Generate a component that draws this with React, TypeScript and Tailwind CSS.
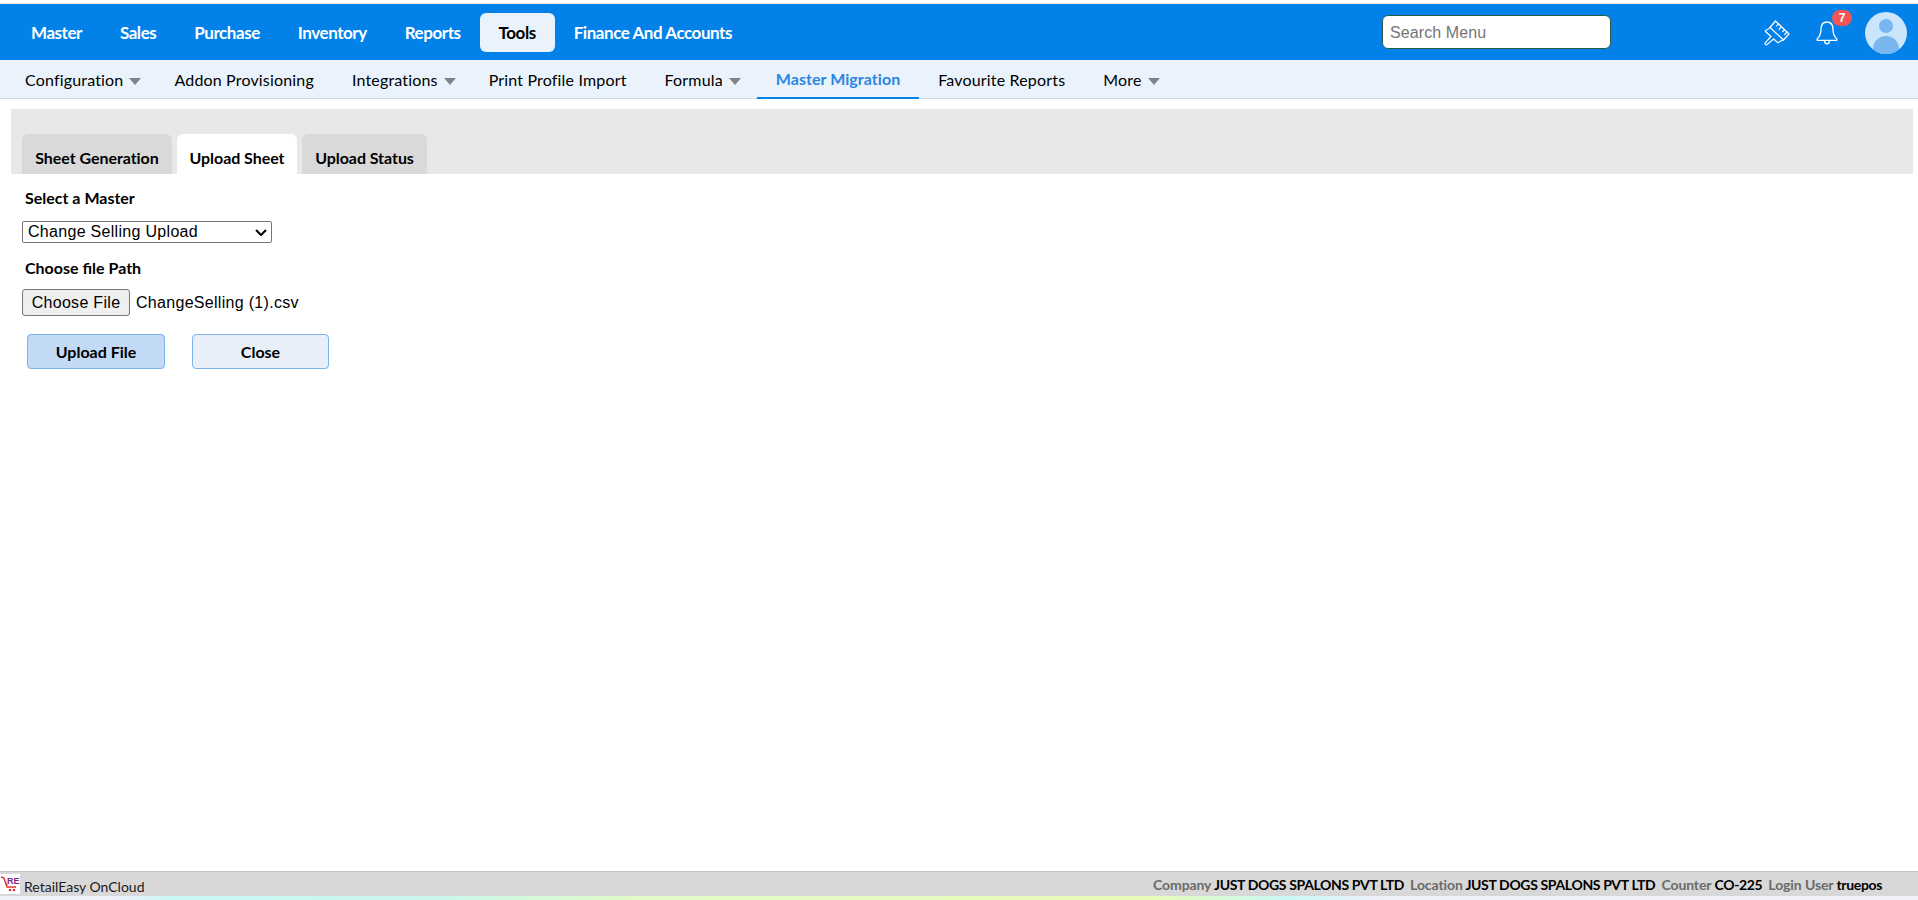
const mainMenu = ["Master", "Sales", "Purchase", "Inventory", "Reports", "Tools", "Finance And Accounts"];

const subMenu = [
  { label: "Configuration", caret: true },
  { label: "Addon Provisioning" },
  { label: "Integrations", caret: true },
  { label: "Print Profile Import" },
  { label: "Formula", caret: true },
  { label: "Master Migration", active: true },
  { label: "Favourite Reports" },
  { label: "More", caret: true },
];

const tabs = [
  { label: "Sheet Generation", width: "w-[150px]" },
  { label: "Upload Sheet", width: "w-[120px]", active: true },
  { label: "Upload Status", width: "w-[125px]" },
];

const footerItems = [
  ["Company", "JUST DOGS SPALONS PVT LTD"],
  ["Location", "JUST DOGS SPALONS PVT LTD"],
  ["Counter", "CO-225"],
  ["Login User", "truepos"],
];

function BrushIcon() {
  return (
    <svg width="26" height="26" viewBox="0 0 26 26" fill="none" stroke="white" strokeWidth="1.2" strokeLinejoin="round" strokeLinecap="round">
      <path d="M11.500 1 25 14l-5.500 6L6 7.500z" />
      <path d="M14.500 3.800l-1.800 2M17.500 6.700l-2.400 2.600M20.500 9.500l-1.800 2M23 12l-2.400 2.600" />
      <path d="M6 7.500c-1 1.300-2.500 2.300-4 2.700 -0.800 0.300-0.800 1-0.200 1.500L7 16.500l-5.800 6.300c-0.800 1 0.800 2.600 1.800 1.800L9.600 19l4 3.500c0.500 0.400 1 0.300 1.300-0.200 0.800-1.100 2.500-1.800 4.600-2.300" />
    </svg>
  );
}

function BellIcon() {
  return (
    <svg width="22" height="24" viewBox="0 0 22 24" fill="none" stroke="white" strokeWidth="1.3" strokeLinejoin="round">
      <path d="M11 1C6.800 1 5 4.500 5 8.500c0 5-1.800 7.500-3.800 9.500-0.500 0.600-0.200 1.300 0.600 1.300h18.400c0.800 0 1.100-0.700 0.600-1.300-2-2-3.800-4.500-3.800-9.500C17 4.500 15.200 1 11 1z" />
      <path d="M8.500 19.500c0 2 1 3.300 2.500 3.300s2.500-1.300 2.500-3.300" />
    </svg>
  );
}

function Avatar() {
  return (
    <div className="w-[42px] h-[42px] rounded-full overflow-hidden bg-[#cbe5fc] relative shrink-0">
      <div className="absolute left-[14px] top-[7px] w-[14px] h-[14px] rounded-full bg-[#78b6f0]" />
      <div className="absolute left-[8px] top-[24px] w-[26px] h-[30px] rounded-full bg-[#78b6f0]" />
    </div>
  );
}

function Logo() {
  return (
    <svg width="20" height="20" viewBox="0 0 20 20" className="shrink-0 bg-white">
      <path d="M1 3l3 1 3 9h9" fill="none" stroke="#e0342f" strokeWidth="1.500" />
      <path d="M4 6l3 5h1z" fill="#e0342f" />
      <text x="7" y="10" fontSize="9" fontWeight="700" fill="#7b2a86" fontFamily="Liberation Sans, sans-serif">
        RE
      </text>
      <circle cx="10" cy="16" r="1.300" fill="#e0342f" />
      <circle cx="14" cy="16" r="1.300" fill="#e0342f" />
    </svg>
  );
}

export default function App() {
  return (
    <div className="w-[1918px] h-[900px] overflow-hidden flex flex-col bg-white font-['Lato',sans-serif] text-black">
      <div className="h-[4px] bg-[#e4e6e8] border-t-[3px] border-white" />

      {/* Main menu */}
      <header className="h-[56px] bg-[#0282e8] flex items-center pl-[12px] pr-[11px]">
        <nav className="flex items-center">
          {mainMenu.map((item) => (
            <div
              key={item}
              className={`h-[39px] px-[19px] pt-[1px] flex items-center rounded-[6px] text-[17px] font-bold tracking-[-0.45px] ${
                item === "Tools" ? "bg-[#eaf3fb] text-black" : "text-white"
              }`}
            >
              {item}
            </div>
          ))}
        </nav>
        <div className="ml-auto flex items-center">
          <div className="w-[229px] h-[34px] bg-white rounded-[6px] border border-[#2a5a45] pl-[7px] pt-[1px] flex items-center font-['Liberation_Sans',sans-serif] text-[16px] tracking-[0.1px] text-[#757575]">
            Search Menu
          </div>
          <div className="ml-[153px] mt-[2px]">
            <BrushIcon />
          </div>
          <div className="ml-[26px] mt-[2px] relative">
            <BellIcon />
            <span className="absolute left-[16px] top-[-11px] w-[20px] h-[16px] rounded-full bg-[#f25555] text-white text-[12px] font-bold flex items-center justify-center font-['Liberation_Sans',sans-serif]">
              7
            </span>
          </div>
          <div className="ml-[27px] mt-[2px]">
            <Avatar />
          </div>
        </div>
      </header>

      {/* Sub menu */}
      <div className="h-[39px] bg-[#eaf3fb] border-b border-[#c9dbe8] flex pl-[6px]">
        {subMenu.map((item) => (
          <div
            key={item.label}
            className={`h-[39px] px-[19px] flex items-center gap-[6px] text-[16px] ${
              item.active
                ? "ml-[2px] text-[#2a86e4] font-bold border-b-2 border-[#0282e8] tracking-[0.05px]"
                : "text-black tracking-[0.17px]"
            }`}
          >
            {item.label}
            {item.caret && (
              <span className="w-0 h-0 border-x-[6.5px] border-x-transparent border-t-[7px] border-t-[#808488] mt-[3px] mr-[-5px]" />
            )}
          </div>
        ))}
      </div>

      {/* Content */}
      <main className="flex-1 flex flex-col pt-[10px]">
        <div className="ml-[11px] mr-[5px] h-[65px] bg-[#e8e8e8] flex items-end gap-[5px] pl-[11px]">
          {tabs.map((tab) => (
            <div
              key={tab.label}
              className={`h-[40px] pt-[8px] rounded-t-[6px] flex items-center justify-center text-[16px] font-bold tracking-[-0.05px] ${tab.width} ${
                tab.active ? "bg-white" : "bg-[#d9d9d9]"
              }`}
            >
              {tab.label}
            </div>
          ))}
        </div>

        <div className="pl-[22px] pt-[11px]">
          <div className="pl-[3px] h-[26px] flex items-center text-[16px] font-bold">Select a Master</div>
          <div className="mt-[10px] w-[250px] h-[22px] border border-[#767676] rounded-[2px] pl-[5px] flex items-center justify-between font-['Liberation_Sans',sans-serif] text-[16px] tracking-[0.3px]">
            Change Selling Upload
            <svg width="12" height="7" viewBox="0 0 12 7" fill="none" stroke="black" strokeWidth="2" className="mr-[4px]">
              <path d="M1 1l5 5 5-5" />
            </svg>
          </div>
          <div className="pl-[3px] mt-[12px] h-[26px] flex items-center text-[16px] font-bold">Choose file Path</div>
          <div className="mt-[8px] flex items-center font-['Liberation_Sans',sans-serif] text-[16px] tracking-[0.3px]">
            <div className="w-[108px] h-[27px] bg-[#efefef] border border-[#767676] rounded-[3px] flex items-center justify-center">
              Choose File
            </div>
            <span className="ml-[6px]">ChangeSelling (1).csv</span>
          </div>
          <div className="mt-[18px] ml-[5px] flex gap-[27px]">
            <div className="w-[138px] h-[35px] rounded-[4px] border border-[#7ab3ee] bg-[#c2daf5] flex items-center justify-center text-[16px] font-bold">
              Upload File
            </div>
            <div className="w-[137px] h-[35px] rounded-[4px] border border-[#7ab3ee] bg-[#e9eff8] flex items-center justify-center text-[16px] font-bold">
              Close
            </div>
          </div>
        </div>
      </main>

      {/* Footer */}
      <footer className="h-[25px] bg-[#d8d8d8] border-t border-[#c4c4c4] flex items-center justify-between pr-[36px] text-[14px]">
        <div className="flex items-center gap-[4px] text-[#1a1a1a]">
          <Logo />
          <span className="pt-[5px]">RetailEasy OnCloud</span>
        </div>
        <div className="flex gap-[6px] font-bold tracking-[-0.35px]">
          {footerItems.map(([label, value]) => (
            <span key={label} className="text-black">
              <span className="text-[#6b6b6b] tracking-[-0.1px]">{label}</span> {value}
            </span>
          ))}
        </div>
      </footer>
      <div className="h-[4px] bg-[linear-gradient(to_right,#eef0fa_0%,#eef0fa_6%,#c9f7f5_9%,#c9f7ee_22%,#e0fbc8_33%,#e8fbb8_60%,#c9f9f5_67%,#eef0fa_72%,#f0f0fa_100%)]" />
    </div>
  );
}
